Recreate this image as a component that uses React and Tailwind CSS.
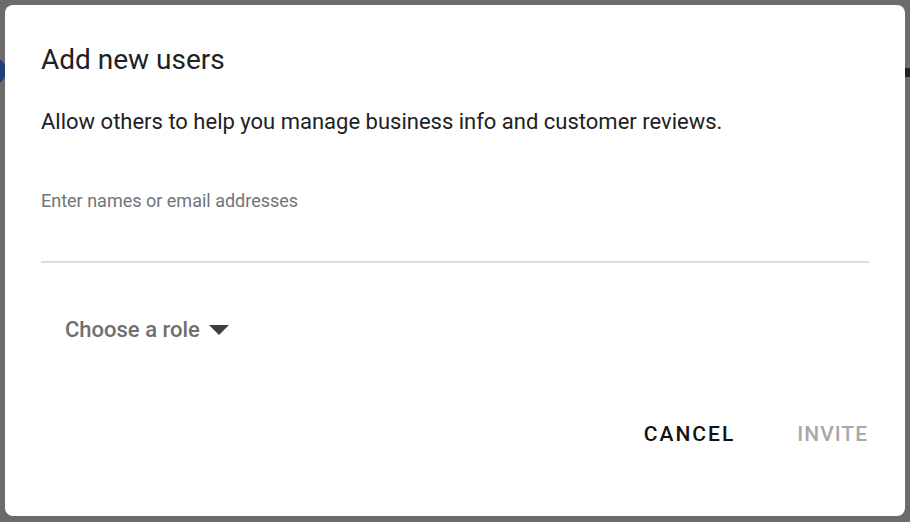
import React from "react";

export default function App() {
  return (
    <div className="relative w-[910px] h-[522px] bg-[#6b6b6b] overflow-hidden" style={{ fontFamily: "Roboto, 'Liberation Sans', sans-serif" }}>
      {/* background bits peeking out */}
      <div className="absolute left-[-22px] top-[57px] w-[28px] h-[28px] rounded-full bg-[#1f3f7a]" />
      <div className="absolute right-0 top-[68px] w-[6px] h-[9px] bg-[#222]" />

      <div className="absolute left-[5px] top-[5px] w-[900px] h-[511px] bg-white rounded-[8px] flex flex-col">
        <div className="pl-[36px] pr-[36px] pt-[38px]">
          <h1 className="text-[28px] leading-[34px] text-[#202124] font-normal">Add new users</h1>
          <p className="mt-[31px] text-[22px] leading-[28px] text-[#202124]">
            Allow others to help you manage business info and customer reviews.
          </p>
          <div className="mt-[54px] text-[18px] leading-[22px] text-[#70757a]">Enter names or email addresses</div>
          <div className="mt-[49px] h-[2px] bg-[#dadce0]" />
          <button className="mt-[53px] ml-[24px] flex items-center gap-[9px] text-[22px] leading-[28px] font-medium text-[#6f6f6f]">
            Choose a role
            <svg width="20" height="10" viewBox="0 0 20 10">
              <path d="M0 0 L20 0 L10 10 Z" fill="#3c4043" />
            </svg>
          </button>
        </div>
        <div className="flex justify-end items-center gap-[62px] pr-[37px] mt-[76px]">
          <button className="text-[21px] leading-[28px] font-medium tracking-[2px] text-[#111]">CANCEL</button>
          <button className="text-[21px] leading-[28px] font-medium tracking-[1px] text-[#a8a8a8]">INVITE</button>
        </div>
      </div>
    </div>
  );
}
